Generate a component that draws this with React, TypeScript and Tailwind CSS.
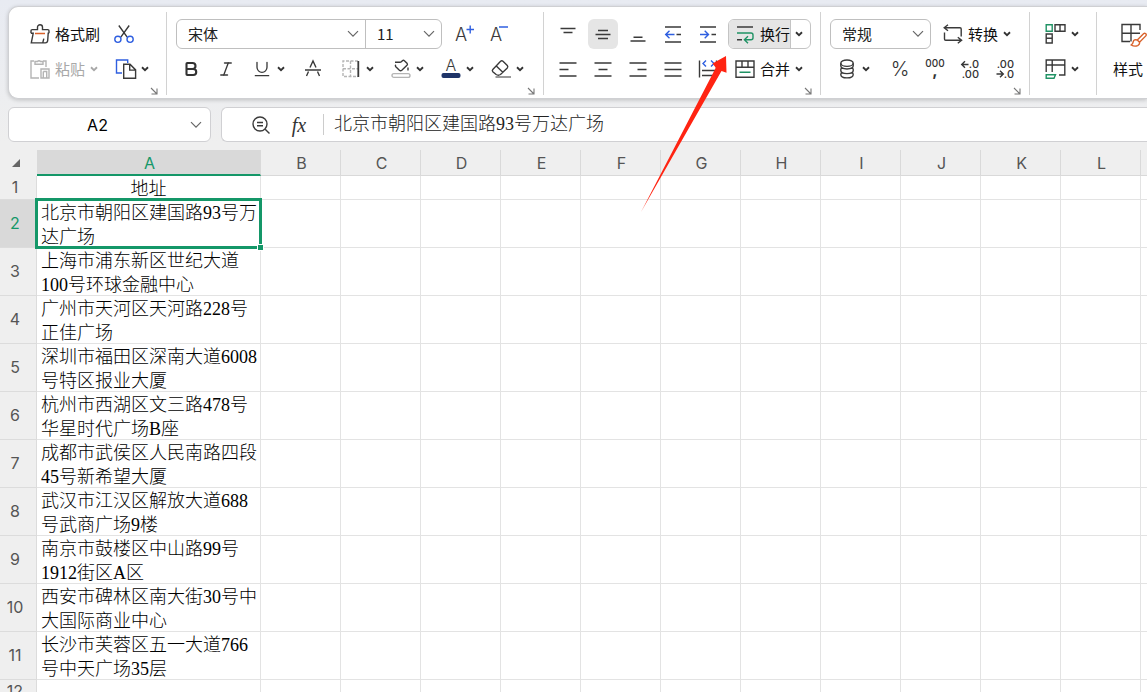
import type { ReactNode } from 'react';
import { Bold, Italic, Underline } from 'lucide-react';

const BLUE = '#2f5fe0';
const GREEN = '#1f9264';

const COLUMNS = 'ABCDEFGHIJKLMNOPQRSTUVWXYZ'.split('');

const ADDRESSES = [
  '北京市朝阳区建国路93号万达广场',
  '上海市浦东新区世纪大道100号环球金融中心',
  '广州市天河区天河路228号正佳广场',
  '深圳市福田区深南大道6008号特区报业大厦',
  '杭州市西湖区文三路478号华星时代广场B座',
  '成都市武侯区人民南路四段45号新希望大厦',
  '武汉市江汉区解放大道688号武商广场9楼',
  '南京市鼓楼区中山路99号1912街区A区',
  '西安市碑林区南大街30号中大国际商业中心',
  '长沙市芙蓉区五一大道766号中天广场35层',
  '',
  '',
  '',
];

interface IconProps {
  w?: number;
  color?: string;
  children: ReactNode;
}

const Icon = ({ w = 20, color = '#3a3a3a', children }: IconProps) => (
  <svg
    width={w}
    height={20}
    viewBox={`0 0 ${w} 20`}
    fill="none"
    stroke={color}
    strokeWidth={1.4}
    className="shrink-0 overflow-visible"
    aria-hidden="true"
  >
    {children}
  </svg>
);

const Caret = ({ color = '#333' }: { color?: string }) => (
  <svg width={8} height={6} viewBox="0 0 8 6" fill="none" stroke={color} strokeWidth={1.9} className="shrink-0" aria-hidden="true">
    <path d="M1 1.3l3 2.8 3-2.8" />
  </svg>
);

const Chevron = () => (
  <svg width={12} height={8} viewBox="0 0 12 8" fill="none" stroke="#666" strokeWidth={1.2} className="shrink-0" aria-hidden="true">
    <path d="M1 1.2l5 5 5-5" />
  </svg>
);

const Launcher = ({ label }: { label: string }) => (
  <button type="button" aria-label={label} className="mr-2 flex h-[13px] items-center self-end">
    <svg width={8} height={8} viewBox="0 0 8 8" fill="none" stroke="#777" strokeWidth={1.1} aria-hidden="true">
      <path d="M1 1l5.5 5.5M7 1.5V7H1.5" />
    </svg>
  </button>
);

const Divider = () => <div className="mt-[5px] mb-[3px] w-px shrink-0 bg-[#d2d2d2]" />;

const Group = ({ className, children }: { className: string; children: ReactNode }) => (
  <div className={`flex shrink-0 flex-col pt-3 ${className}`}>{children}</div>
);

const Row = ({ className = '', children }: { className?: string; children: ReactNode }) => (
  <div className={`flex h-[30px] items-center ${className}`}>{children}</div>
);

interface ToolProps {
  label: string;
  className?: string;
  children: ReactNode;
}

const Tool = ({ label, className = 'gap-[5px]', children }: ToolProps) => (
  <button type="button" aria-label={label} title={label} className={`flex h-[30px] shrink-0 items-center ${className}`}>
    {children}
  </button>
);

const cell = 'w-[30px] justify-center rounded-md';

const Picker = ({ label, value, className }: { label: string; value: string; className: string }) => (
  <label className={`relative block h-[30px] shrink-0 ${className}`}>
    <select aria-label={label} defaultValue={value} className="h-full w-full appearance-none bg-transparent pl-[11px] text-[15px] text-[#222] outline-none">
      <option>{value}</option>
    </select>
    <span className="pointer-events-none absolute inset-y-0 right-[6px] flex items-center">
      <Chevron />
    </span>
  </label>
);

const ClipboardGroup = () => (
  <Group className="w-[157px] gap-[5px] pl-[21px]">
    <Row className="gap-[14px]">
      <Tool label="格式刷">
        <Icon>
          <path d="M1 9.3V6.8q0-1.2 1.2-1.2h5.3V3.2a2.5 2.5 0 0 1 5 0v2.4h5.3q1.2 0 1.2 1.2v2.5M1 9.3h2.2L1.3 18.9h14q2.2 0 2.4-2.4l.5-7.2h.8M12.8 18.7l1-4" />
          <path d="M5 9.5h10" stroke="#d9622b" />
        </Icon>
        <span>格式刷</span>
      </Tool>
      <Tool label="剪切">
        <Icon>
          <path d="M4.8 1.5l8.4 11.7M15.2 1.5L6.8 13.2" />
          <g stroke={BLUE}>
            <circle cx={3.9} cy={15.3} r={3.1} />
            <circle cx={16.1} cy={15.3} r={3.1} />
          </g>
        </Icon>
      </Tool>
    </Row>
    <Row className="gap-[17px]">
      <Tool label="粘贴" className="gap-[5px] text-[#a8a8a8]">
        <Icon color="#b4b4b4">
          <path d="M4 2H1v17h8M13 2h3v6M5 5.2V2.5h2.5a1.8 1.8 0 0 1 3 0H13v2.7zM11 10h8v9h-8zM13.3 12.5h3.4v6.5M13.3 12.5V19" />
        </Icon>
        <span>粘贴</span>
        <Caret color="#a8a8a8" />
      </Tool>
      <Tool label="复制" className="gap-1">
        <Icon w={22}>
          <path d="M12.7 4V1H1.5v13H7" stroke={BLUE} />
          <path d="M8.7 5.3H15l5.6 5.6v8.4H8.7zM14.7 5.5v5.6h5.7" />
        </Icon>
        <Caret />
      </Tool>
    </Row>
    <div className="-mt-[5px] flex justify-end">
      <Launcher label="剪贴板设置" />
    </div>
  </Group>
);

const FontGroup = () => (
  <Group className="w-[376px] gap-[5px] pl-[9px]">
    <Row>
      <div className="flex h-[30px] rounded-md border border-[#bfbfbf]">
        <Picker label="字体" value="宋体" className="-my-px w-[188px]" />
        <Picker label="字号" value="11" className="-my-px w-[76px] border-l border-[#bfbfbf]" />
      </div>
      <Tool label="增大字号" className="ml-[13px]">
        <Icon w={22}>
          <text x={0} y={17} fontSize={18} fill="#3a3a3a" stroke="none" className="font-[Inter] font-light">A</text>
          <path d="M11.5 5.5h7.5M15.2 1.5v8" stroke={BLUE} />
        </Icon>
      </Tool>
      <Tool label="减小字号" className="ml-[13px]">
        <Icon w={22}>
          <text x={0} y={17} fontSize={18} fill="#3a3a3a" stroke="none" className="font-[Inter] font-light">A</text>
          <path d="M9 3h9" stroke={BLUE} />
        </Icon>
      </Tool>
    </Row>
    <Row className="gap-[17px] pl-[6px]">
      <Tool label="加粗">
        <Bold size={18} color="#333" strokeWidth={2.8} />
      </Tool>
      <Tool label="倾斜">
        <Italic size={18} color="#3a3a3a" strokeWidth={1.8} />
      </Tool>
      <Tool label="下划线">
        <Underline size={20} color="#3a3a3a" strokeWidth={1.6} />
        <Caret />
      </Tool>
      <Tool label="删除线">
        <Icon w={22}>
          <path d="M3 11h16M8 8.5L11 2l3 6.5M6.5 12.5L4.5 17M15.5 12.5l2 4.5" />
        </Icon>
      </Tool>
      <Tool label="边框">
        <Icon>
          <path d="M17 2H2v15.5h15M9.5 2v15.5M2 9.8h15" stroke="#b5b5b5" strokeDasharray="3 1.5" />
          <path d="M17.3 2v16" strokeWidth={1.8} />
        </Icon>
        <Caret />
      </Tool>
      <Tool label="填充颜色">
        <Icon>
          <path d="M4 3.3h4.8q1 0 1.8-.8l.8-.8q1-.9 2 0l2.6 2.6q.9 1 0 2l-5.2 5q-1.2 1-2.4 0L4.8 7.7q-.9-1 0-1.9M17 8.5v3" />
          <rect x={1} y={14.6} width={18} height={3.8} rx={1.9} stroke="#b5b5b5" />
        </Icon>
        <Caret />
      </Tool>
      <Tool label="字体颜色">
        <Icon>
          <text x={4.5} y={12} fontSize={16} fill="#3a3a3a" stroke="none" className="font-[Inter] font-light">A</text>
          <rect x={0.5} y={14} width={19} height={5} rx={2} fill="#1f3468" stroke="none" />
        </Icon>
        <Caret />
      </Tool>
      <Tool label="清除">
        <Icon>
          <path d="M1.8 10.5l7.8-8.2q1.2-1 2.4 0l4.3 4.2q1 1.2 0 2.4l-6.8 6.6q-2.2 1.4-4.4 0l-3.3-2.8q-1-1.1 0-2.2zM5.3 6.9l6.5 6.3" />
          <path d="M4.5 18H20" stroke="#777" />
        </Icon>
        <Caret />
      </Tool>
    </Row>
    <div className="-mt-[5px] flex justify-end">
      <Launcher label="字体设置" />
    </div>
  </Group>
);

const AlignGroup = () => (
  <Group className="w-[276px] gap-[5px] pl-[9px]">
    <Row className="gap-[5px]">
      <Tool label="顶端对齐" className={cell}>
        <Icon><path d="M2.5 4.5h15M5.5 8.5h9" /></Icon>
      </Tool>
      <Tool label="垂直居中" className={`${cell} bg-[#e5e5e5]`}>
        <Icon><path d="M5 6.5h10M2.5 10.5h15M5 14.5h10" /></Icon>
      </Tool>
      <Tool label="底端对齐" className={cell}>
        <Icon><path d="M5.5 13.2h9M2.5 17h15" /></Icon>
      </Tool>
      <Tool label="减少缩进" className={cell}>
        <Icon>
          <path d="M2 3h16M13.5 10.5H18M2 18h16" />
          <path d="M11.5 10.5h-9M6.5 6.8l-3.8 3.7 3.8 3.7" stroke={BLUE} />
        </Icon>
      </Tool>
      <Tool label="增加缩进" className={cell}>
        <Icon>
          <path d="M2 3h16M13.5 10.5H18M2 18h16" />
          <path d="M2 10.5h8.5M6.7 6.8l3.8 3.7-3.8 3.7" stroke={BLUE} />
        </Icon>
      </Tool>
      <div className="flex h-[30px] overflow-hidden rounded-md border border-[#c4c4c4]">
        <Tool label="换行" className="-my-px gap-[5px] border-r border-[#c4c4c4] bg-[#e5e5e5] pl-[6px]">
          <Icon>
            <path d="M2 3h16M2 15.8h5" />
            <path d="M2 9h14q2 0 2 2v2.8q0 2-2 2H9.5M13 12.2l-3.6 3.6 3.6 3.4" stroke={GREEN} />
          </Icon>
          <span>换行</span>
        </Tool>
        <Tool label="换行选项" className="-my-px w-[19px] pl-1">
          <Caret />
        </Tool>
      </div>
    </Row>
    <Row className="gap-[5px]">
      <Tool label="左对齐" className={cell}>
        <Icon><path d="M1.5 4h17M1.5 10.5h9M1.5 17h17" /></Icon>
      </Tool>
      <Tool label="水平居中" className={cell}>
        <Icon><path d="M1.5 4h17M5.5 10.5h9M1.5 17h17" /></Icon>
      </Tool>
      <Tool label="右对齐" className={cell}>
        <Icon><path d="M1.5 4h17M9.5 10.5h9M1.5 17h17" /></Icon>
      </Tool>
      <Tool label="两端对齐" className={cell}>
        <Icon><path d="M1.5 4h17M1.5 10.5h17M1.5 17h17" /></Icon>
      </Tool>
      <Tool label="分散对齐" className={cell}>
        <Icon>
          <path d="M1.5 1.5v17M18.5 1.5v17M4 11.5h13M4 16.5h13" />
          <path d="M8 1.5L5 4.5l3 3M13 1.5l3 3-3 3" stroke={BLUE} />
        </Icon>
      </Tool>
      <Tool label="合并" className="gap-[5px] pl-[7px]">
        <Icon>
          <path d="M1 2h18v16.3H1zM1 8.2h18M7 2v6.2M13 2v6.2" />
          <path d="M4.5 13.2h11" stroke={GREEN} />
        </Icon>
        <span>合并</span>
        <Caret />
      </Tool>
    </Row>
    <div className="-mt-[5px] flex justify-end">
      <Launcher label="对齐设置" />
    </div>
  </Group>
);

const NumberGroup = () => (
  <Group className="w-[208px] gap-[5px] pl-[9px]">
    <Row className="gap-3">
      <div className="flex rounded-md border border-[#bfbfbf]">
        <Picker label="数字格式" value="常规" className="-my-px w-[99px]" />
      </div>
      <Tool label="转换">
        <Icon>
          <path d="M5 .8L1.2 3.8 5 6.8M1.5 3.8H17q1.2 0 1.2 1.2v7.5M1.5 8.5V15q0 1.2 1.2 1.2h15.5M14.8 13.2l3.8 3-3.8 3" />
        </Icon>
        <span>转换</span>
        <Caret />
      </Tool>
    </Row>
    <Row className="pl-[7px]">
      <Tool label="货币格式" className="mr-[15px] gap-[5px]">
        <Icon>
          <ellipse cx={10} cy={4.2} rx={6.2} ry={3.2} />
          <path d="M3.8 4.2v2.6c0 4.2 12.4 4.2 12.4 0V4.2M5 8.6q-1.2.8-1.2 2v.9c0 4.2 12.4 4.2 12.4 0v-.9q0-1.2-1.2-2M5 13.4q-1.2.8-1.2 2c0 4.6 12.4 4.6 12.4 0q0-1.2-1.2-2" />
        </Icon>
        <Caret />
      </Tool>
      <Tool label="百分比样式" className={`${cell} mr-[5px] font-[Inter] text-xl font-light text-[#333]`}>
        %
      </Tool>
      <Tool label="千位分隔样式" className={`${cell} mr-[5px]`}>
        <Icon>
          <g fill="#333" stroke="none" className="font-[Inter] font-medium">
            <text x={10} y={8} fontSize={10} textAnchor="middle">000</text>
            <text x={10} y={17} fontSize={16} fontWeight={700} textAnchor="middle">,</text>
          </g>
        </Icon>
      </Tool>
      <Tool label="增加小数位数" className={`${cell} mr-[5px]`}>
        <Icon>
          <g fill="#333" stroke="none" className="font-[Inter] font-medium">
            <text x={19} y={9} fontSize={11} textAnchor="end">.0</text>
            <text x={19} y={19} fontSize={11} textAnchor="end">.00</text>
          </g>
          <path d="M8.5 5.5H2M5 2.2L1.7 5.5 5 8.8" />
        </Icon>
      </Tool>
      <Tool label="减少小数位数" className={cell}>
        <Icon>
          <g fill="#333" stroke="none" className="font-[Inter] font-medium">
            <text x={19} y={9} fontSize={11} textAnchor="end">.00</text>
            <text x={19} y={19} fontSize={11} textAnchor="end">.0</text>
          </g>
          <path d="M1.5 15h6.5M5 11.7L8.3 15 5 18.3" />
        </Icon>
      </Tool>
    </Row>
    <div className="-mt-[5px] flex justify-end">
      <Launcher label="数字设置" />
    </div>
  </Group>
);

const TableGroup = () => (
  <Group className="w-[66px] gap-[5px] pl-[15px]">
    <Row>
      <Tool label="行和列">
        <Icon w={21}>
          <path d="M10 .8h10v6.5H10zM15 .8v6.5M1.2 10h6v9h-6zM1.2 14.2h6" />
          <path d="M1.2.8h6v6.5h-6z" stroke={GREEN} />
        </Icon>
        <Caret />
      </Tool>
    </Row>
    <Row>
      <Tool label="工作表">
        <Icon w={21}>
          <path d="M1.2 13V1h18.6v15H14M1.2 6h18.6M7.2 1v12" />
          <path d="M1.2 15.7h9.3l-1.5 3.5H1.2z" stroke={GREEN} />
        </Icon>
        <Caret />
      </Tool>
    </Row>
  </Group>
);

const StyleGroup = () => (
  <Group className="pl-4">
    <button type="button" className="flex flex-col gap-[5px]">
      <span className="flex h-[30px] items-center pl-2">
        <svg width={26} height={26} viewBox="0 0 26 26" fill="none" stroke="#3a3a3a" strokeWidth={1.4} aria-hidden="true">
          <path d="M9 20.5H1V3.5h18V9M1 12.3h18M10 3.5v17" />
          <path d="M24.5 12.5q1.3 1 .3 2.4l-6.3 6.3-2.2-2.3 6.2-6.2q1-.9 2-.2zM16.2 19q-3.2-1-4 1.8-.3 2-2 3.2 3.2 1.8 6.5.6 2.4-1.3 1.8-3.6z" fill="#fff" stroke="#d9622b" />
        </svg>
      </span>
      <span className="flex h-[30px] items-center gap-1">
        样式
        <Caret />
      </span>
    </button>
  </Group>
);

const FormulaBar = () => (
  <div className="mt-2 flex h-[35px] gap-[10px] pl-2">
    <div className="flex w-[203px] shrink-0 items-center rounded-md border border-[#d0d0d3] bg-white pr-2">
      <input
        aria-label="名称框"
        defaultValue="A2"
        className="h-full w-full min-w-0 pr-1 text-center font-[Inter] text-base text-black outline-none"
      />
      <button type="button" aria-label="选择名称">
        <Chevron />
      </button>
    </div>
    <div className="flex min-w-0 flex-1 items-center rounded-l-md border border-r-0 border-[#d0d0d3] bg-white pl-[29px]">
      <Tool label="查找">
        <Icon>
          <circle cx={9} cy={9} r={7} />
          <path d="M14.2 14.2l4.3 4.3M6 7.5h6M6 10.8h6" />
        </Icon>
      </Tool>
      <button type="button" aria-label="插入函数" className="mr-[14px] ml-[18px] w-5 font-['Liberation_Serif',serif] text-xl text-[#333] italic">
        fx
      </button>
      <div className="mr-[10px] h-[21px] w-px bg-[#ccc]" />
      <input
        aria-label="编辑栏"
        defaultValue={ADDRESSES[0]}
        className="h-full min-w-0 flex-1 pb-[5px] font-['Liberation_Serif','Noto_Sans_CJK_SC',serif] text-lg font-light text-[#222] outline-none"
      />
    </div>
  </div>
);

const Selection = () => (
  <div className="pointer-events-none absolute -inset-[2px] z-10 border-3 border-[#149768]">
    <span className="absolute -right-[5px] -bottom-[5px] size-[7px] border border-white bg-[#149768]" />
  </div>
);

const Sheet = () => (
  <table className="mt-2 w-[2261px] table-fixed border-separate border-spacing-0 bg-white">
    <colgroup>
      <col className="w-[37px]" />
      <col className="w-[224px]" />
      {COLUMNS.slice(1).map((name) => (
        <col key={name} className="w-20" />
      ))}
    </colgroup>
    <thead>
      <tr className="h-[26px] bg-[#efefef] font-[Inter] text-base leading-5 text-[#555]">
        <td className="p-0">
          <svg width={8} height={8} viewBox="0 0 8 8" className="ml-3" aria-hidden="true">
            <path d="M8 0v8H0z" fill="#666" />
          </svg>
        </td>
        {COLUMNS.map((name) => (
          <th
            key={name}
            scope="col"
            className={
              name === 'A'
                ? 'border-r border-b-2 border-r-[#d9d9d9] border-b-[#149768] bg-[#d9d9d9] p-0 pt-0.5 pl-0.5 font-normal text-[#149768]'
                : 'border-r border-b border-[#d9d9d9] p-0 pt-px pl-0.5 font-normal'
            }
          >
            {name}
          </th>
        ))}
      </tr>
    </thead>
    <tbody>
      {['地址', ...ADDRESSES].map((text, i) => (
        <tr key={i} className={text.length > 2 ? 'h-12' : 'h-6'}>
          <th
            scope="row"
            className={`border-r border-b border-[#dcdcdc] p-0 pr-1.5 pb-0.5 font-[Inter] text-base leading-5 font-normal ${
              i === 1 ? 'bg-[#d9d9d9] text-[#149768]' : 'bg-[#efefef] text-[#555]'
            }`}
          >
            {i + 1}
          </th>
          <td
            className={`relative border-r border-b border-[#e3e3e3] p-0 font-['Liberation_Serif','Noto_Sans_CJK_SC',serif] text-lg leading-6 font-light text-black ${
              i === 0 ? 'text-center' : 'pl-1'
            }`}
          >
            {/* one pixel shorter than its lines, which leaves room for the grid line */}
            <div className={text.length > 2 ? 'h-[47px] pt-px' : 'h-[23px] pt-px'}>{text}</div>
            {i === 1 && <Selection />}
          </td>
          {COLUMNS.slice(1).map((name) => (
            <td key={name} className="border-r border-b border-[#e3e3e3] p-0" />
          ))}
        </tr>
      ))}
    </tbody>
  </table>
);

// Red pointer that leads the eye to the wrap button
const Pointer = () => (
  <svg
    width={88}
    height={160}
    viewBox="0 0 88 160"
    className="pointer-events-none absolute top-[54px] left-[640px] z-20"
    aria-hidden="true"
  >
    <path d="M86 2L72.5 9.5l3.3 4.3L1 158 81.5 17l5 1.8z" fill="#ff2412" />
  </svg>
);

export default function App() {
  return (
    <div className="relative h-screen overflow-hidden bg-[#efefef] font-['Noto_Sans_CJK_SC',sans-serif] text-[15px] leading-5 text-[#111]">
      <div className="bg-linear-to-b from-[#e8ebf2] to-[#efefef] pt-[6px]">
        <div className="ml-2 flex h-[93px] overflow-hidden rounded-l-[10px] border border-r-0 border-[#cfd0d3] bg-white shadow-[0_1px_4px_#00000033]">
          <ClipboardGroup />
          <Divider />
          <FontGroup />
          <Divider />
          <AlignGroup />
          <Divider />
          <NumberGroup />
          <Divider />
          <TableGroup />
          <Divider />
          <StyleGroup />
        </div>
        <FormulaBar />
      </div>
      <Sheet />
      <Pointer />
    </div>
  );
}
